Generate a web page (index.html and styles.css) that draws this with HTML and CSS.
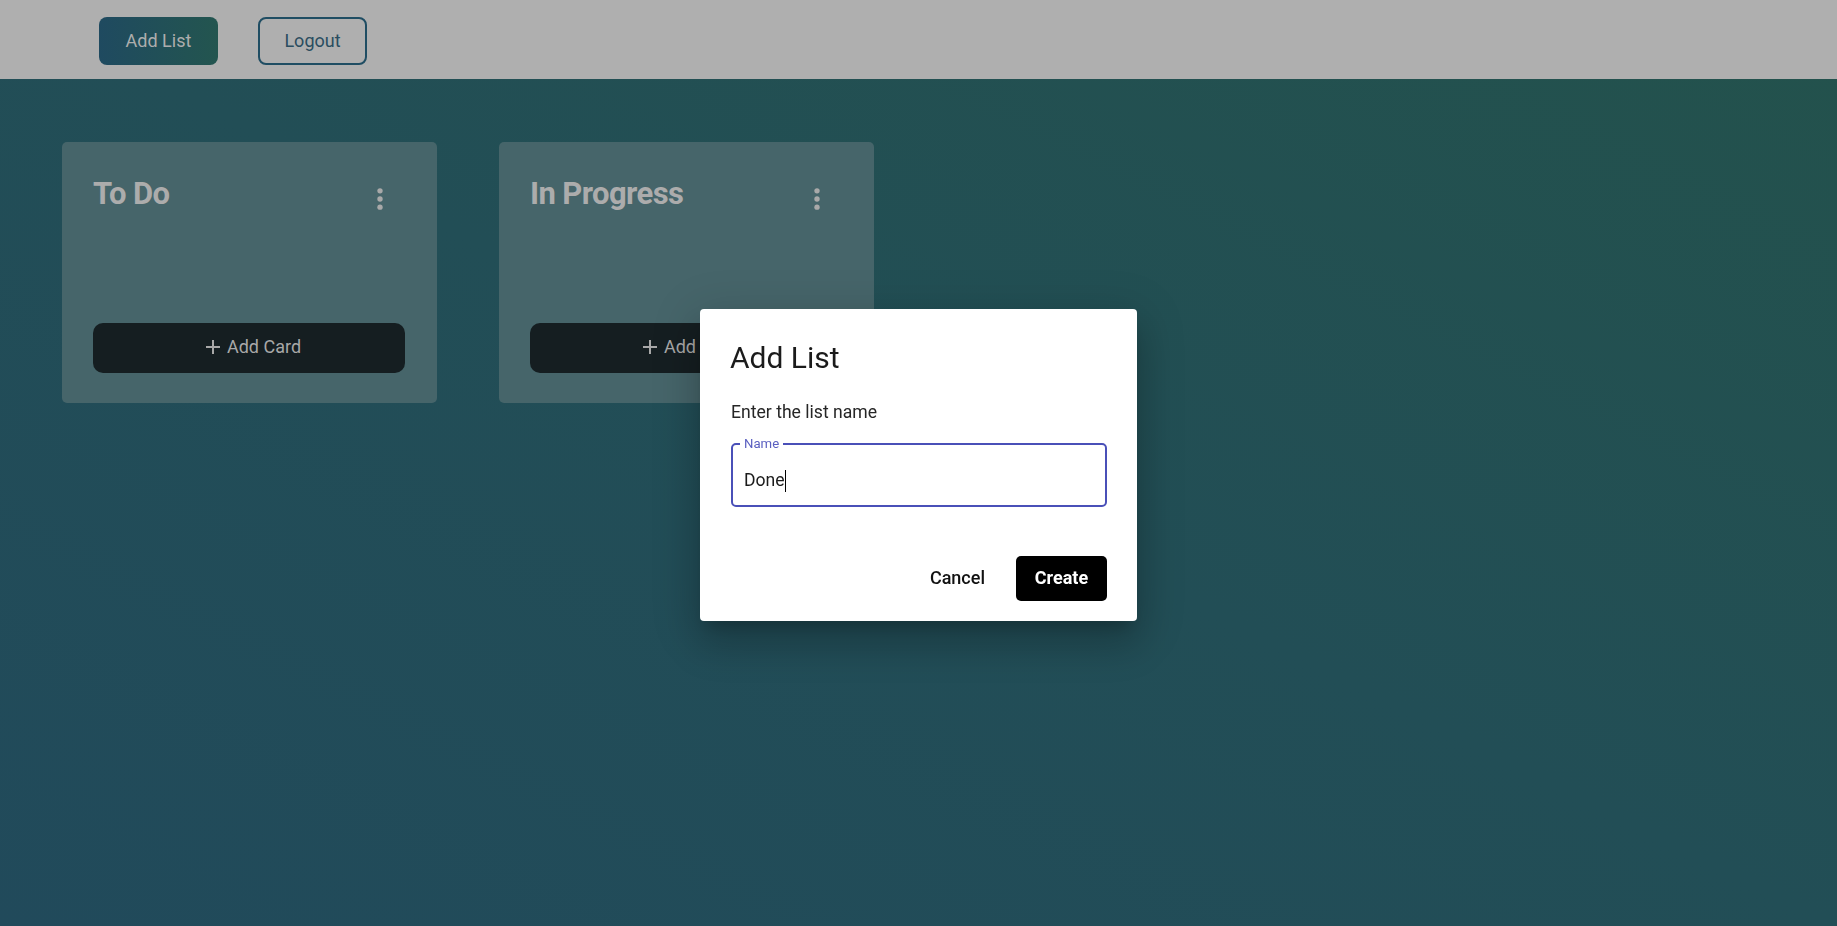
FILE: index.html
```html
<!DOCTYPE html>
<html lang="en">
<head>
<meta charset="utf-8">
<title>Board</title>
<link rel="stylesheet" href="styles.css">
</head>
<body>
<header class="topbar">
  <button class="btn-add-list">Add List</button>
  <button class="btn-logout">Logout</button>
</header>
<main class="board">
  <section class="list">
    <div class="list-head">
      <h2 class="list-title">To Do</h2>
      <span class="kebab"><svg viewBox="0 0 24 24" width="28" height="28"><circle cx="12" cy="5" r="2.3"/><circle cx="12" cy="12" r="2.3"/><circle cx="12" cy="19" r="2.3"/></svg></span>
    </div>
    <button class="add-card"><svg viewBox="0 0 16 16" width="16" height="16"><path d="M8 1v14M1 8h14"/></svg>Add Card</button>
  </section>
  <section class="list">
    <div class="list-head">
      <h2 class="list-title">In Progress</h2>
      <span class="kebab"><svg viewBox="0 0 24 24" width="28" height="28"><circle cx="12" cy="5" r="2.3"/><circle cx="12" cy="12" r="2.3"/><circle cx="12" cy="19" r="2.3"/></svg></span>
    </div>
    <button class="add-card"><svg viewBox="0 0 16 16" width="16" height="16"><path d="M8 1v14M1 8h14"/></svg>Add Card</button>
  </section>
</main>
<div class="overlay">
  <div class="dialog">
    <h1 class="dialog-title">Add List</h1>
    <p class="dialog-text">Enter the list name</p>
    <div class="field">
      <span class="field-label">Name</span>
      <div class="field-input">Done<span class="caret"></span></div>
    </div>
    <div class="actions">
      <button class="btn-cancel">Cancel</button>
      <button class="btn-create">Create</button>
    </div>
  </div>
</div>
</body>
</html>
```

FILE: styles.css
```css
* { box-sizing: border-box; }
html, body { height: 100%; }
body {
  margin: 0;
  font-family: Roboto, "Liberation Sans", sans-serif;
  background: linear-gradient(to top right, #214a5b 0%, #224e56 50%, #23524c 100%);
  overflow: hidden;
}
button { font-family: inherit; cursor: pointer; }

.topbar {
  height: 79px;
  background: #afafaf;
  display: flex;
  align-items: center;
  padding-left: 99px;
  gap: 40px;
  padding-top: 3px;
}
.btn-add-list {
  width: 119px;
  height: 48px;
  border: none;
  border-radius: 8px;
  background: linear-gradient(to right, #1f4a60, #23554f);
  color: #adadad;
  font-size: 18px;
  padding: 0 0 2px;
}
.btn-logout {
  width: 109px;
  height: 48px;
  border: 2px solid #1f4d63;
  border-radius: 8px;
  background: transparent;
  color: #2a4d60;
  font-size: 18px;
  padding: 0 0 2px;
}

.board {
  display: flex;
  gap: 62px;
  padding: 63px 0 0 62px;
}
.list {
  width: 375px;
  height: 261px;
  background: #46656a;
  border-radius: 5px;
  display: flex;
  flex-direction: column;
  padding: 33px 32px 30px 31px;
}
.list-head {
  display: flex;
  justify-content: space-between;
  align-items: flex-start;
}
.list-title {
  margin: 0;
  font-size: 31px;
  line-height: 1.2;
  font-weight: 700;
  color: #acacac;
  letter-spacing: -0.6px;
}
.kebab {
  display: block;
  width: 28px;
  height: 28px;
  margin-top: 10px;
  margin-right: 11px;
}
.kebab svg { display: block; fill: #a9a9a9; }
.add-card {
  margin-top: auto;
  height: 50px;
  width: 100%;
  border: none;
  border-radius: 10px;
  background: #151e21;
  color: #a8a8a8;
  font-size: 18px;
  display: flex;
  align-items: center;
  justify-content: center;
  gap: 6px;
  padding: 0 0 4px 8px;
}
.add-card svg { stroke: #a8a8a8; stroke-width: 2; fill: none; margin-top: 2px; }

.overlay {
  position: fixed;
  inset: 0;
  display: flex;
  align-items: center;
  justify-content: center;
  padding-top: 4px;
}
.dialog {
  width: 437px;
  height: 312px;
  background: #fff;
  border-radius: 4px;
  padding: 31px 30px 20px 31px;
  display: flex;
  flex-direction: column;
  box-shadow: 0 11px 15px -7px rgba(0,0,0,0.2), 0 24px 38px 3px rgba(0,0,0,0.14), 0 9px 46px 8px rgba(0,0,0,0.12);
}
.dialog-title {
  margin: 0 0 0 -1px;
  font-size: 30px;
  line-height: 36px;
  font-weight: 400;
  color: #1b1b1b;
}
.dialog-text {
  margin: 23px 0 0;
  font-size: 17.6px;
  line-height: 26.4px;
  color: #262626;
}
.field {
  position: relative;
  margin-top: 18px;
  height: 64px;
  border: 2px solid #4a50b8;
  border-radius: 5px;
}
.field-label {
  position: absolute;
  left: 7px;
  top: -8px;
  padding: 0 4px;
  background: #fff;
  font-size: 13.2px;
  line-height: 14px;
  color: #5a5fc0;
}
.field-input {
  padding: 22px 11px 9px;
  font-size: 17.6px;
  line-height: 26.4px;
  color: #1b1b1b;
  display: flex;
  align-items: center;
}
.caret {
  display: inline-block;
  width: 1px;
  height: 22px;
  background: #000;
}
.actions {
  margin-top: auto;
  display: flex;
  justify-content: flex-end;
  align-items: center;
  gap: 19px;
}
.btn-cancel {
  background: transparent;
  border: none;
  padding: 0 12px 2px;
  height: 45px;
  font-size: 18px;
  font-weight: 500;
  color: #111;
}
.btn-create {
  width: 91px;
  height: 45px;
  background: #000;
  color: #fff;
  border: none;
  border-radius: 5px;
  font-size: 18px;
  font-weight: 700;
  padding: 0 0 2px;
}
```
